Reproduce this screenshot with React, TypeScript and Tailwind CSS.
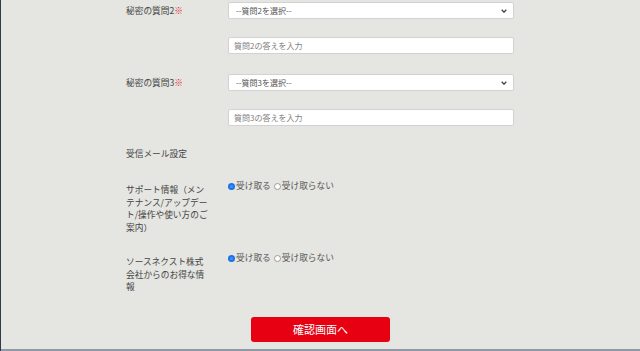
const ChevronDown = () => (
  <svg width="6" height="4" viewBox="0 0 6 4" className="shrink-0">
    <path d="M0.7 0.7 L3 3.2 L5.3 0.7" fill="none" stroke="#444" strokeWidth="1.3" />
  </svg>
);

const SelectBox = ({ text }: { text: string }) => (
  <div className="h-[17px] w-[286px] bg-white border border-[#d2d2d2] rounded-[2px] flex items-center justify-between pl-[7px] pr-[6px] text-[8px] text-[#555]">
    <span>{text}</span>
    <ChevronDown />
  </div>
);

const TextBox = ({ placeholder }: { placeholder: string }) => (
  <input
    className="h-[17px] w-[286px] bg-white border border-[#d2d2d2] rounded-[2px] pl-[5px] text-[8px] text-[#555] placeholder:text-[#808080] outline-none"
    placeholder={placeholder}
  />
);

const Radio = ({ checked, label }: { checked?: boolean; label: string }) => (
  <span className="flex items-center">
    {checked ? (
      <span className="w-[7px] h-[7px] rounded-full bg-[#1a73e8] flex items-center justify-center">
        <span className="w-[3px] h-[3px] rounded-full bg-[#4a90f0]" />
      </span>
    ) : (
      <span className="w-[7px] h-[7px] rounded-full bg-white border border-[#9a9a9a]" />
    )}
    <span className="ml-[1px]">{label}</span>
  </span>
);

const RadioGroup = () => (
  <div className="flex items-center gap-[3px] h-[12px] leading-[12px] text-[8.7px] text-[#555]">
    <Radio checked label="受け取る" />
    <Radio label="受け取らない" />
  </div>
);

const Question = ({ n }: { n: number }) => (
  <div className="flex">
    <div className="w-[102px] h-[17px] flex items-center text-[8.7px] text-[#444]">
      秘密の質問{n}
      <span className="text-[#e8202a]">※</span>
    </div>
    <div className="flex flex-col gap-[18px]">
      <SelectBox text={`--質問${n}を選択--`} />
      <TextBox placeholder={`質問${n}の答えを入力`} />
    </div>
  </div>
);

const MailRow = ({ label }: { label: string }) => (
  <div className="flex">
    <div className="w-[102px] pt-[4px]">
      <div className="w-[86px] text-[8.7px] leading-[12.5px] text-[#444]">{label}</div>
    </div>
    <RadioGroup />
  </div>
);

export default function App() {
  return (
    <div className="h-[351px] w-[640px] overflow-hidden bg-[#e5e5e1] border-l border-[#2f3b49] flex flex-col font-['Noto_Sans_CJK_JP','Noto_Sans',sans-serif]">
      <div className="pl-[125px] pt-[2px] flex flex-col">
        <Question n={2} />
        <div className="mt-[20px]">
          <Question n={3} />
        </div>
        <div className="mt-[21px] text-[8.7px] leading-[13px] text-[#444]">受信メール設定</div>
        <div className="mt-[20px]">
          <MailRow label="サポート情報（メンテナンス/アップデート/操作や使い方のご案内）" />
        </div>
        <div className="mt-[18px]">
          <MailRow label="ソースネクスト株式会社からのお得な情報" />
        </div>
      </div>
      <div className="flex-1 flex justify-center items-start pt-[23px]">
        <button className="w-[139px] h-[25px] bg-[#e60012] rounded-[3px] text-white text-[11px] flex items-center justify-center">
          確認画面へ
        </button>
      </div>
      <div className="h-[2px] bg-[#8e9ba7]" />
    </div>
  );
}
